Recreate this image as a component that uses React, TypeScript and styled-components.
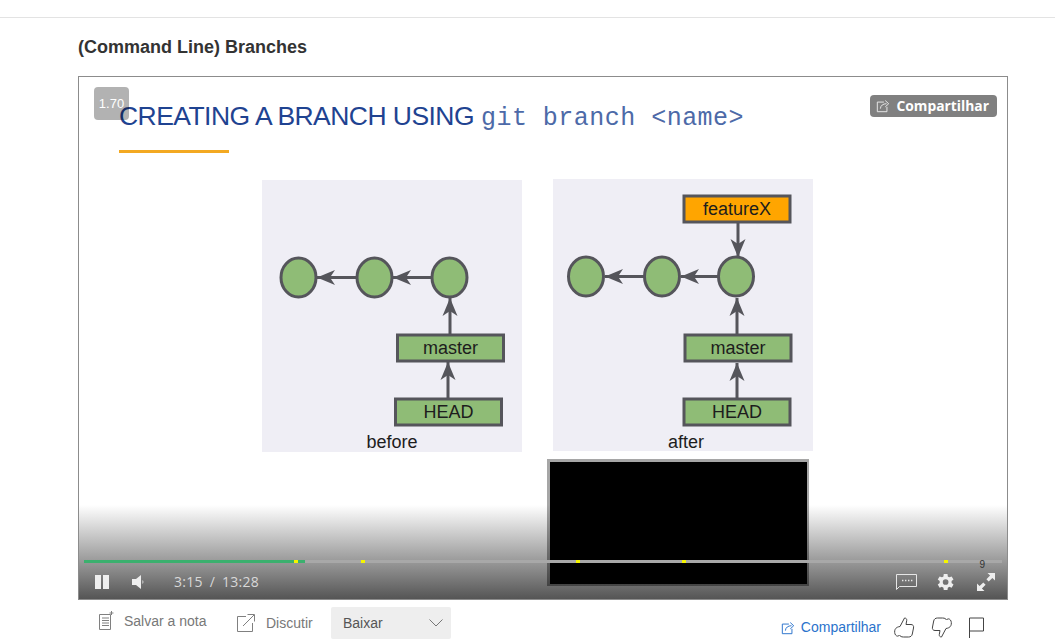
import React from 'react'
import styled, { createGlobalStyle } from 'styled-components'

const GlobalStyle = createGlobalStyle`
  html, body {
    margin: 0;
    padding: 0;
    background: #fff;
    overflow: hidden;
  }
  body {
    font-family: 'Liberation Sans', Arial, sans-serif;
  }
`

const Page = styled.div`
  width: 1055px;
  height: 640px;
  overflow: hidden;
`

const TopBar = styled.div`
  height: 17px;
  border-bottom: 1px solid #e3e3e3;
`

const Content = styled.div`
  padding: 0 47px 0 78px;
`

const Title = styled.h1`
  margin: 0;
  padding-top: 18px;
  height: 58px;
  box-sizing: border-box;
  font: bold 18px/23px 'Liberation Sans', Arial, sans-serif;
  color: #333;
`

const Player = styled.div`
  position: relative;
  width: 930px;
  height: 524px;
  box-sizing: border-box;
  border: 1px solid #8c8c8c;
  background: #fff;
  overflow: hidden;
`

// translucent, the slide heading shows through it
const SpeedBadge = styled.div`
  position: absolute;
  left: 15px;
  top: 10px;
  width: 35px;
  height: 33px;
  border-radius: 4px;
  background: rgba(0, 0, 0, 0.3);
  color: #fff;
  font: 13px/33px 'Liberation Sans', Arial, sans-serif;
  text-align: center;
`

const SlideHeading = styled.div`
  position: absolute;
  left: 40px;
  top: 22px;
  white-space: nowrap;
  color: #1f4391;
  font: 26.5px/34px 'Liberation Sans', Arial, sans-serif;
  letter-spacing: -0.55px;
`

const SlideCode = styled.span`
  font: 25px/34px 'Liberation Mono', 'Courier New', monospace;
  letter-spacing: 0.47px;
  margin-left: 7px;
  color: #4d6aa8;
`

const SlideRule = styled.div`
  position: absolute;
  left: 40px;
  top: 73px;
  width: 110px;
  height: 3px;
  background: #f3a922;
`

const ShareBadge = styled.div`
  position: absolute;
  right: 10px;
  top: 18px;
  height: 22px;
  padding: 0 8px 0 6px;
  display: flex;
  align-items: center;
  gap: 6px;
  border-radius: 4px;
  background: #808080;
  color: #fff;
  font: 700 13.85px/22px 'Open Sans', sans-serif;
`

const Figure = styled.div<{ $left: number; $top: number }>`
  position: absolute;
  left: ${({ $left }) => $left}px;
  top: ${({ $top }) => $top}px;
`

// sits over the fade, only its frame darkens towards the bottom
const Thumbnail = styled.div`
  position: absolute;
  left: 468px;
  top: 382px;
  width: 262px;
  height: 127px;
  box-sizing: border-box;
  border-style: solid;
  border-width: 3px 2px 2px 3px;
  border-image: linear-gradient(to bottom, #a6a6a6 0%, #a6a6a6 35%, #444 100%) 1;
  background: #000;
`

const Controls = styled.div`
  position: absolute;
  left: 0;
  right: 0;
  bottom: 0;
  height: 94px;
  background: linear-gradient(to bottom, rgba(85, 85, 85, 0) 0%, #555 100%);
`

const Track = styled.div`
  position: absolute;
  left: 5px;
  right: 5px;
  bottom: 36px;
  height: 3px;
  background: #a8a8a8;
`

const Played = styled.div<{ $width: number }>`
  height: 100%;
  width: ${({ $width }) => $width}px;
  background: #3bb06e;
`

const Marker = styled.div<{ $left: number }>`
  position: absolute;
  left: ${({ $left }) => $left}px;
  top: 0;
  width: 4px;
  height: 3px;
  background: #f5f500;
`

const ControlRow = styled.div`
  position: absolute;
  left: 0;
  right: 0;
  bottom: 0;
  height: 34px;
  display: flex;
  align-items: center;
  padding: 0 12px 0 16px;
`

const PlayerIcon = styled.svg<{ $gap?: number }>`
  display: block;
  margin-left: ${({ $gap }) => $gap || 0}px;
`

const Time = styled.div`
  margin-left: 28px;
  display: flex;
  gap: 7px;
  color: #d8d8d8;
  font: 14px/20px 'Open Sans', sans-serif;
  letter-spacing: 0.25px;
`

const RightControls = styled.div`
  margin-left: auto;
  display: flex;
  align-items: center;
`

const Spinner = styled.div`
  position: absolute;
  right: 22px;
  bottom: 29px;
  color: #333;
  font: 10px/10px 'Liberation Sans', Arial, sans-serif;
`

const ActionBar = styled.div`
  display: flex;
  align-items: flex-start;
  height: 40px;
`

const Action = styled.div<{ $width: number; $top: number; $left: number; $gap: number }>`
  width: ${({ $width }) => $width}px;
  box-sizing: border-box;
  display: flex;
  align-items: center;
  gap: ${({ $gap }) => $gap}px;
  padding: ${({ $top }) => $top}px 0 0 ${({ $left }) => $left}px;
  color: #787878;
  font: 14px/19px 'Liberation Sans', Arial, sans-serif;
`

const ActionLabel = styled.span`
  position: relative;
  top: 1px;
`

const Select = styled.div`
  width: 120px;
  height: 32px;
  margin-top: 7px;
  box-sizing: border-box;
  padding: 0 8px 0 12px;
  display: flex;
  align-items: center;
  justify-content: space-between;
  background: #eeeeee;
  border-radius: 2px;
  color: #555;
  font: 14px/32px 'Liberation Sans', Arial, sans-serif;
`

const Feedback = styled.div`
  margin-left: auto;
  padding-top: 17px;
  padding-right: 24px;
  display: flex;
  align-items: center;
`

const ShareLink = styled.div`
  display: flex;
  align-items: center;
  gap: 6px;
  margin-right: 13px;
  color: #2a73cc;
  font: 14px/19px 'Liberation Sans', Arial, sans-serif;
`

const FeedbackIcon = styled.svg<{ $gap: number }>`
  display: block;
  margin-left: ${({ $gap }) => $gap}px;
`

const ShareIcon = ({ color, size }: { color: string; size: number }) => (
  <svg width={size} height={size} viewBox="0 0 16 16" fill="none" stroke={color} strokeWidth="1.1">
    <path d="M9 3.5H1.5v11h11V9" />
    <path d="M5 11c.3-3.6 3-5.6 7-5.6" />
    <path d="M10.6 1.8l3.9 3.6-3.9 3.6" />
  </svg>
)

type Box = { x: number; y: number; w: number; label: string; fill?: string }

const DiagramArt = ({ nodes, boxes, links, caption, captionX, captionY }: {
  nodes: number[]
  boxes: Box[]
  links: number[][]
  caption: string
  captionX: number
  captionY: number
}) => (
  <svg width="260" height="273" viewBox="0 0 260 273" fontFamily="'Liberation Sans', Arial, sans-serif">
    <rect width="260" height="272" fill="#efeef5" />
    {links.map(([x1, y1, x2, y2], i) => {
      const horizontal = y1 === y2
      const dir = horizontal ? Math.sign(x2 - x1) : Math.sign(y2 - y1)
      const head = horizontal
        ? `M${x2} ${y2}l${-dir * 18} -7.5l${dir * 5} 7.5l${-dir * 5} 7.5z`
        : `M${x2} ${y2}l-7.5 ${-dir * 18}l7.5 ${dir * 5}l7.5 ${-dir * 5}z`
      return (
        <g key={`link-${i}`}>
          <line x1={x1} y1={y1} x2={x2} y2={y2} stroke="#55555b" strokeWidth="3" />
          <path d={head} fill="#55555b" />
        </g>
      )
    })}
    {nodes.map((cx) => (
      <ellipse key={`node-${cx}`} cx={cx} cy="97.5" rx="17.5" ry="19.5" fill="#8fbc76" stroke="#55555b" strokeWidth="3" />
    ))}
    {boxes.map((box) => (
      <g key={box.label}>
        <rect x={box.x} y={box.y} width={box.w} height="26" fill={box.fill || '#8fbc76'} stroke="#55555b" strokeWidth="3" />
        <text x={box.x + box.w / 2} y={box.y + 19} textAnchor="middle" fontSize="18" fill="#1d1d1d">{box.label}</text>
      </g>
    ))}
    <text x={captionX} y={captionY} textAnchor="middle" fontSize="18" fill="#1d1d1d">{caption}</text>
  </svg>
)

const markers = [210, 277, 492, 598, 860]

export default function App() {
  return (
    <Page>
      <GlobalStyle />
      <TopBar />
      <Content>
        <Title>(Command Line) Branches</Title>
        <Player>
          <SlideHeading>
            CREATING A BRANCH USING<SlideCode>git branch &lt;name&gt;</SlideCode>
          </SlideHeading>
          <SlideRule />
          <Figure $left={183} $top={103}>
            <DiagramArt
              nodes={[36.5, 112.5, 187.5]}
              boxes={[
                { x: 135.5, y: 155, w: 106, label: 'master' },
                { x: 133.5, y: 219, w: 106, label: 'HEAD' },
              ]}
              links={[
                [94, 97.5, 55, 97.5],
                [169, 97.5, 131, 97.5],
                [188, 155, 188, 118],
                [186, 219, 186, 182],
              ]}
              caption="before"
              captionX={130}
              captionY={268}
            />
          </Figure>
          <Figure $left={474} $top={102}>
            <DiagramArt
              nodes={[33, 109, 183]}
              boxes={[
                { x: 131, y: 17, w: 106, label: 'featureX', fill: '#ffa500' },
                { x: 132, y: 156, w: 106, label: 'master' },
                { x: 131, y: 220, w: 106, label: 'HEAD' },
              ]}
              links={[
                [91, 97.5, 52, 97.5],
                [165, 97.5, 128, 97.5],
                [185, 44, 185, 78],
                [184, 156, 184, 119],
                [184, 220, 184, 184],
              ]}
              caption="after"
              captionX={133}
              captionY={269}
            />
          </Figure>
          <Controls />
          <Thumbnail />
          <SpeedBadge>1.70</SpeedBadge>
          <ShareBadge>
            <ShareIcon color="#e8e8e8" size={14} />
            Compartilhar
          </ShareBadge>
          <Track>
            <Played $width={221} />
            {markers.map((left) => (
              <Marker key={left} $left={left} />
            ))}
          </Track>
          <Spinner>9</Spinner>
          <ControlRow>
            <PlayerIcon width="14" height="14" viewBox="0 0 14 14" fill="#eee">
              <rect x="0" y="0" width="6" height="14" />
              <rect x="8" y="0" width="6" height="14" />
            </PlayerIcon>
            <PlayerIcon $gap={23} width="14" height="14" viewBox="0 0 14 14" fill="#eee">
              <path d="M0 4h4l5-4v14l-5-4H0z" />
              <path d="M10.5 5c1.2 1 1.2 3 0 4z" />
            </PlayerIcon>
            <Time>
              <span>3:15</span>
              <span>/</span>
              <span>13:28</span>
            </Time>
            <RightControls>
              <PlayerIcon width="21" height="16" viewBox="0 0 21 16" fill="none" stroke="#e6e6e6" strokeWidth="1">
                <path d="M.5.5h20v12H3.5l-3 3z" />
                <path d="M6 6.5h1.4M9 6.5h1.4M12 6.5h1.4M15 6.5h1.4" strokeWidth="1.4" />
              </PlayerIcon>
              <PlayerIcon $gap={20} width="18" height="18" viewBox="0 0 24 24" fill="#eeeeee">
                <path fillRule="evenodd" d="M19.4 13.2a7.6 7.6 0 0 0 0-2.4l2.6-2-2.5-4.3-3 1.2a7.5 7.5 0 0 0-2.1-1.2L14 1.3H9l-.4 3.2a7.5 7.5 0 0 0-2.1 1.2l-3-1.2L1 8.8l2.6 2a7.6 7.6 0 0 0 0 2.4L1 15.2l2.5 4.3 3-1.2c.6.5 1.3.9 2.1 1.2l.4 3.2h5l.4-3.2a7.5 7.5 0 0 0 2.1-1.2l3 1.2 2.5-4.3zM11.5 15.8a3.8 3.8 0 1 1 0-7.6 3.8 3.8 0 0 1 0 7.6z" />
              </PlayerIcon>
              <PlayerIcon $gap={22} width="18" height="18" viewBox="0 0 18 18" fill="#eeeeee">
                <path d="M10.5 0H18v7.5l-2.6-2.6-3.7 3.7-2.3-2.3 3.7-3.7z" />
                <path d="M7.5 18H0v-7.5l2.6 2.6 3.700-3.7 2.300 2.300-3.700 3.700z" />
              </PlayerIcon>
            </RightControls>
          </ControlRow>
        </Player>
        <ActionBar>
          <Action $width={137} $top={11} $left={20} $gap={10}>
            <svg width="16" height="19" viewBox="0 0 16 19" fill="none" stroke="#808080" strokeWidth="1">
              <path d="M12.5 3.5H1.5v15h11z" />
              <path d="M4 7h7M4 9.5h7M4 12h7M4 14.5h7" />
              <path d="M13.5 0v4M11.5 2h4" />
            </svg>
            <ActionLabel>Salvar a nota</ActionLabel>
          </Action>
          <Action $width={116} $top={13} $left={22} $gap={11}>
            <svg width="18" height="18" viewBox="0 0 18 18" fill="none" stroke="#808080" strokeWidth="1">
              <path d="M9 2.5H.5v15h15V9" />
              <path d="M6 12L17 1M10.5.5h7v7" />
            </svg>
            <ActionLabel>Discutir</ActionLabel>
          </Action>
          <Select>
            Baixar
            <svg width="14" height="8" viewBox="0 0 14 8" fill="none" stroke="#777" strokeWidth="1">
              <path d="M.5.5L7 7l6.5-6.5" />
            </svg>
          </Select>
          <Feedback>
            <ShareLink>
              <ShareIcon color="#2a73cc" size={14} />
              Compartilhar
            </ShareLink>
            <FeedbackIcon $gap={0} width="21" height="21" viewBox="0 0 21 21" fill="none" stroke="#444" strokeWidth="1">
              <path d="M6 9.5L10.5 1c1.5 0 2.500 1 2.200 2.600L12 7.500h5c2 0 3 1.500 2.500 3.500l-1.200 6c-.4 2-1.800 3-3.800 3H9.500C7 20 6 19 5.500 18c-.8 1-1.800 1.500-3 .8C1 18 .5 16 .7 14c.2-2 1.500-4 5.300-4.500z" />
            </FeedbackIcon>
            <FeedbackIcon $gap={16} width="21" height="21" viewBox="0 0 21 21" fill="none" stroke="#444" strokeWidth="1">
              <path d="M15 11.5L10.5 20c-1.5 0-2.500-1-2.200-2.600L9 13.500H4c-2 0-3-1.500-2.500-3.500l1.200-6c.4-2 1.800-3 3.800-3h5c2.500 0 3.500 1 4 2 .8-1 1.800-1.500 3-.8 1.500.8 2 2.800 1.800 4.800-.2 2-1.500 4-5.300 4.500z" />
            </FeedbackIcon>
            <FeedbackIcon $gap={16} width="16" height="21" viewBox="0 0 16 21" fill="none" stroke="#444" strokeWidth="1">
              <path d="M1.5 21V1h14v13h-14" />
            </FeedbackIcon>
          </Feedback>
        </ActionBar>
      </Content>
    </Page>
  )
}
